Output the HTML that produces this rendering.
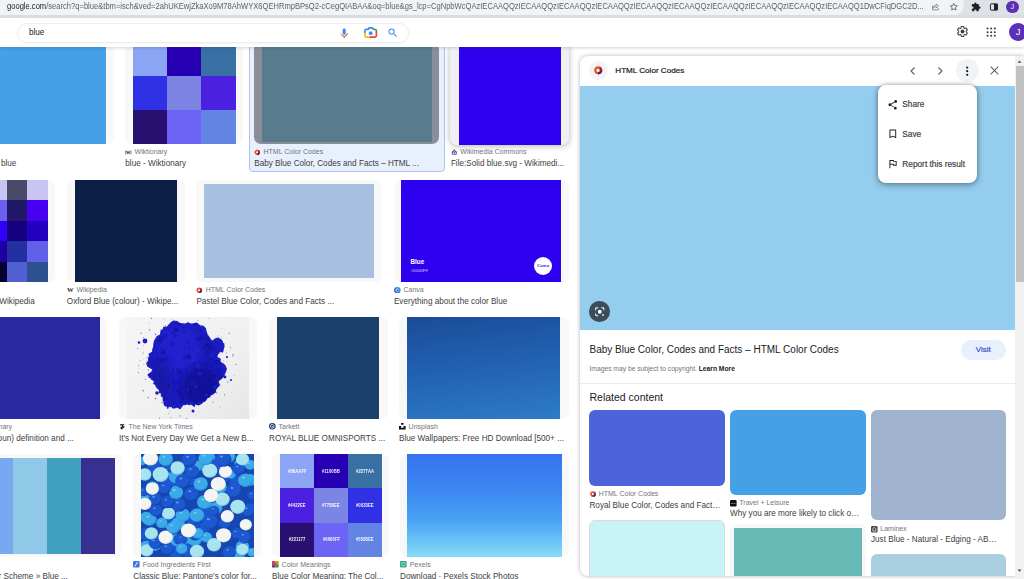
<!DOCTYPE html>
<html lang="en"><head><meta charset="utf-8"><title>blue - Google Search</title>
<style>
*{box-sizing:border-box;margin:0;padding:0}
html,body{width:1024px;height:579px;overflow:hidden;background:#fff;font-family:"Liberation Sans",Arial,sans-serif}
#root{position:relative;width:1024px;height:579px;overflow:hidden;background:#fff}
.abs{position:absolute}
#grid{position:absolute;left:0;top:0;width:579px;height:579px;overflow:hidden}
.tile{position:absolute;border-radius:7px;overflow:hidden}
.im,.cell{position:absolute}
.cell{display:flex;align-items:center;justify-content:center}
.hex{font-size:5.1px;font-weight:700;color:#fff;letter-spacing:.1px;line-height:5px;opacity:.92;transform:scaleX(.82);white-space:nowrap}
.fav{position:absolute;width:6.6px;height:6.6px;line-height:0}
.fav svg{display:block}
.lab{position:absolute;font-size:7px;line-height:10px;color:#70757a;white-space:nowrap}
.ttl{position:absolute;font-size:8.17px;line-height:10px;color:#3c4043;white-space:nowrap}
.sel{position:absolute;background:#e8f0fe;border:1px solid #aec3f5;border-radius:4px}
.cv1{position:absolute;left:16.8px;top:78.3px;font-size:6.3px;line-height:8px;font-weight:700;color:#fff}
.cv2{position:absolute;left:16.9px;top:89.4px;font-size:4.4px;line-height:4px;color:#d8d4ff}
.cvc{position:absolute;left:140.6px;top:77px;width:18px;height:18px;border-radius:50%;background:#fff;display:flex;align-items:center;justify-content:center}
.cvc span{font-family:"Liberation Serif",serif;font-style:italic;font-weight:700;font-size:4.6px;color:#3a20e0;line-height:5px}
/* chrome bar */
#chrome{position:absolute;left:0;top:0;width:1024px;height:17.5px;background:#dee1e6}
#omni{position:absolute;left:-20px;top:-6px;width:983.6px;height:20.6px;border-radius:10.3px;background:#f1f3f4}
#url{position:absolute;left:7px;top:1.4px;font-size:8.3px;line-height:11px;white-space:nowrap;color:#5f6368;transform-origin:0 0;transform:scaleX(.9134)}
#url b{font-weight:400;color:#202124}
#chromeline{position:absolute;left:0;top:14.6px;width:1024px;height:3px;background:#dadce0}
/* google header */
#hdr{position:absolute;left:0;top:17.5px;width:1024px;height:29.4px;background:#fff;box-shadow:0 1px 3px rgba(60,64,67,.22)}
#sbox{position:absolute;left:17.2px;top:5.4px;width:392.3px;height:19.8px;border-radius:9.9px;border:1px solid #eeeeee;background:#fff;box-shadow:0 1px 2px rgba(0,0,0,.04)}
#q{position:absolute;left:28.9px;top:9.4px;font-size:8.2px;line-height:12px;color:#202124}
/* panel */
#pwrap{position:absolute;left:570px;top:47px;width:454px;height:532px;background:#fff;box-shadow:-2px 0 4px rgba(0,0,0,.12)}
#card{position:absolute;left:580.2px;top:55.8px;width:444px;height:520.2px;border-radius:8px 0 0 8px;background:#fff;box-shadow:0 0 4px rgba(0,0,0,.3);overflow:hidden}
#bigimg{position:absolute;left:0;top:29.8px;width:434.8px;height:244.8px;background:#94cdee}
.ptitle{position:absolute;font-size:8.1px;line-height:10px;font-weight:400;color:#202124;white-space:nowrap;-webkit-text-stroke:.22px #202124}
.rt{position:absolute;border-radius:6px}
#sb{position:absolute;left:1015px;top:55.5px;width:9px;height:524.4px;background:#f1f1f1}
#sbthumb{position:absolute;left:.8px;top:10.4px;width:8.2px;height:215.8px;background:#c1c1c1}
#menu{position:absolute;left:877.7px;top:85px;width:99.6px;height:97.9px;border-radius:8px;background:#fff;box-shadow:0 0 4px rgba(0,0,0,.3),0 2px 6px 1px rgba(0,0,0,.22)}
.mi{position:absolute;left:24.6px;font-size:8.3px;line-height:10px;color:#3c4043;white-space:nowrap;font-weight:400;-webkit-text-stroke:.18px #3c4043}
</style></head>
<body><div id="root">
<div id="grid">
<div class="tile" style="left:-20px;top:42.2px;width:133.6px;height:102.0px;background:#f8f8f8;"><div class="im" style="left:0px;top:0px;width:126.4px;height:103px;background:#45a0e6;"></div></div>
<div class="ttl" style="left:0.9px;top:159.4px">blue</div>
<div class="tile" style="left:125.3px;top:42.2px;width:117.5px;height:102.0px;background:#f8f8f8;"><div class="cell" style="left:8.0px;top:0.1px;width:34.4px;height:34.4px;background:#8ca4f4"></div><div class="cell" style="left:42.1px;top:0.1px;width:34.4px;height:34.4px;background:#2800b4"></div><div class="cell" style="left:76.2px;top:0.1px;width:34.4px;height:34.4px;background:#3870a4"></div><div class="cell" style="left:8.0px;top:34.2px;width:34.4px;height:34.4px;background:#3030e4"></div><div class="cell" style="left:42.1px;top:34.2px;width:34.4px;height:34.4px;background:#7c84e4"></div><div class="cell" style="left:76.2px;top:34.2px;width:34.4px;height:34.4px;background:#4c20e0"></div><div class="cell" style="left:8.0px;top:68.3px;width:34.4px;height:34.4px;background:#281070"></div><div class="cell" style="left:42.1px;top:68.3px;width:34.4px;height:34.4px;background:#6c64f4"></div><div class="cell" style="left:76.2px;top:68.3px;width:34.4px;height:34.4px;background:#6484e4"></div></div>
<div class="fav" style="left:125.3px;top:148.7px"><svg viewBox="0 0 16 16" width="6.6" height="6.6"><rect x=".5" y="3" width="15" height="10.500" fill="#e8e8e8"/><path d="M1.500 3.500v9.500M14.500 3.500v9.500" stroke="#555" stroke-width="1.400"/><text x="8" y="12.500" font-family="Liberation Serif,serif" font-size="11" font-weight="700" text-anchor="middle" fill="#222">W</text></svg></div><div class="lab" style="left:134.6px;top:147.3px">Wiktionary</div>
<div class="ttl" style="left:125.3px;top:159.4px">blue - Wiktionary</div>
<div class="sel" style="left:248.8px;top:30px;width:195.9px;height:142.1px"></div>
<div class="tile" style="left:254.2px;top:42.2px;width:184.6px;height:102.0px;background:#8a8e99;"><div class="im" style="left:8px;top:0px;width:170.3px;height:99.6px;background:#587b8e;"></div></div>
<div class="fav" style="left:254.2px;top:148.7px"><svg viewBox="0 0 16 16" width="6.6" height="6.6"><rect width="16" height="16" rx="2.500" fill="#fff"/><g transform="translate(8 8) scale(.9) translate(-8 -8)"><circle cx="8" cy="8" r="7.500" fill="#e9502e"/><path d="M12.300 1.850A7.500 7.500 0 0 1 15.500 8L8 8Z" fill="#a8283e"/><path d="M15.500 8A7.500 7.500 0 0 1 7 15.430L8 8Z" fill="#55205e"/><circle cx="7.600" cy="8.200" r="2.800" fill="#fff"/></g></svg></div><div class="lab" style="left:263.5px;top:147.3px">HTML Color Codes</div>
<div class="ttl" style="left:254.2px;top:159.4px">Baby Blue Color, Codes and Facts – HTML ...</div>
<div class="tile" style="left:450.2px;top:42.2px;width:118.8px;height:102.0px;background:#f0f0f0;box-shadow:0 1px 6px rgba(0,0,0,.3);height:102.7px;"><div class="im" style="left:8.8px;top:0px;width:102.0px;height:103px;background:#2d00f0;"></div></div>
<div class="fav" style="left:451px;top:148.7px"><svg viewBox="0 0 16 16" width="6.6" height="6.6"><circle cx="8" cy="9.500" r="5" fill="none" stroke="#2b6cb8" stroke-width="2.600"/><circle cx="8" cy="9.500" r="2" fill="#d8232a"/><path d="M8 0l2.500 4h-5z" fill="#d8232a"/></svg></div><div class="lab" style="left:460.3px;top:147.3px">Wikimedia Commons</div>
<div class="ttl" style="left:450.9px;top:159.4px">File:Solid blue.svg - Wikimedi...</div>
<div class="tile" style="left:-30px;top:179.8px;width:85.3px;height:102.2px;background:#f8f8f8;"><div class="cell" style="left:16.4px;top:0.0px;width:20.7px;height:20.78px;background:#c8c4f4"></div><div class="cell" style="left:36.8px;top:0.0px;width:20.7px;height:20.78px;background:#4a4a68"></div><div class="cell" style="left:57.199999999999996px;top:0.0px;width:20.7px;height:20.78px;background:#c8c4f4"></div><div class="cell" style="left:16.4px;top:20.48px;width:20.7px;height:20.78px;background:#6c60f0"></div><div class="cell" style="left:36.8px;top:20.48px;width:20.7px;height:20.78px;background:#221868"></div><div class="cell" style="left:57.199999999999996px;top:20.48px;width:20.7px;height:20.78px;background:#4800f0"></div><div class="cell" style="left:16.4px;top:40.96px;width:20.7px;height:20.78px;background:#3000f8"></div><div class="cell" style="left:36.8px;top:40.96px;width:20.7px;height:20.78px;background:#140080"></div><div class="cell" style="left:57.199999999999996px;top:40.96px;width:20.7px;height:20.78px;background:#2200c0"></div><div class="cell" style="left:16.4px;top:61.44px;width:20.7px;height:20.78px;background:#1c00a0"></div><div class="cell" style="left:36.8px;top:61.44px;width:20.7px;height:20.78px;background:#2430a0"></div><div class="cell" style="left:57.199999999999996px;top:61.44px;width:20.7px;height:20.78px;background:#6060e8"></div><div class="cell" style="left:16.4px;top:81.92px;width:20.7px;height:20.78px;background:#040030"></div><div class="cell" style="left:36.8px;top:81.92px;width:20.7px;height:20.78px;background:#5060d0"></div><div class="cell" style="left:57.199999999999996px;top:81.92px;width:20.7px;height:20.78px;background:#2c5090"></div></div>
<div class="ttl" style="left:-0.7px;top:297.2px">Wikipedia</div>
<div class="tile" style="left:66.8px;top:179.8px;width:118.4px;height:102.2px;background:#f8f8f8;"><div class="im" style="left:8.2px;top:0px;width:102.0px;height:103px;background:#0c1f47;"></div></div>
<div class="fav" style="left:67.2px;top:286.5px"><svg viewBox="0 0 16 16" width="6.6" height="6.6"><text x="8" y="12.600" font-family="Liberation Serif,serif" font-size="16" font-weight="700" text-anchor="middle" fill="#333">W</text></svg></div><div class="lab" style="left:76.5px;top:285.1px">Wikipedia</div>
<div class="ttl" style="left:66.8px;top:297.2px">Oxford Blue (colour) - Wikipe...</div>
<div class="tile" style="left:196.4px;top:179.8px;width:185.6px;height:102.2px;background:#f8f8f8;"><div class="im" style="left:7.8px;top:3.9px;width:169.89999999999998px;height:94.5px;background:#a8c0e0;"></div></div>
<div class="fav" style="left:196.4px;top:286.5px"><svg viewBox="0 0 16 16" width="6.6" height="6.6"><rect width="16" height="16" rx="2.500" fill="#fff"/><g transform="translate(8 8) scale(.9) translate(-8 -8)"><circle cx="8" cy="8" r="7.500" fill="#e9502e"/><path d="M12.300 1.850A7.500 7.500 0 0 1 15.500 8L8 8Z" fill="#a8283e"/><path d="M15.500 8A7.500 7.500 0 0 1 7 15.430L8 8Z" fill="#55205e"/><circle cx="7.600" cy="8.200" r="2.800" fill="#fff"/></g></svg></div><div class="lab" style="left:205.70000000000002px;top:285.1px">HTML Color Codes</div>
<div class="ttl" style="left:196.4px;top:297.2px">Pastel Blue Color, Codes and Facts ...</div>
<div class="tile" style="left:393.7px;top:179.8px;width:175.0px;height:102.2px;background:#f8f8f8;"><div class="im" style="left:7.8px;top:0px;width:159.39999999999998px;height:103px;background:#2d00f0;"></div><div class="cv1">Blue</div><div class="cv2">#0000FF</div><div class="cvc"><span>Canva</span></div></div>
<div class="fav" style="left:394.2px;top:286.5px"><svg viewBox="0 0 16 16" width="6.6" height="6.6"><defs><linearGradient id="cg" x1="0" y1="1" x2="1" y2="0"><stop offset="0" stop-color="#7d2ae8"/><stop offset="1" stop-color="#00c4cc"/></linearGradient></defs><circle cx="8" cy="8" r="8" fill="url(#cg)"/><path d="M11 10.200A3.600 3.600 0 1 1 10.600 5.500" fill="none" stroke="#fff" stroke-width="1.600" stroke-linecap="round"/></svg></div><div class="lab" style="left:403.5px;top:285.1px">Canva</div>
<div class="ttl" style="left:393.9px;top:297.2px">Everything about the color Blue</div>
<div class="tile" style="left:-20px;top:317.0px;width:127.0px;height:101.8px;background:#f8f8f8;"><div class="im" style="left:0px;top:0px;width:119.6px;height:103px;background:#2828a0;"></div></div>
<div class="lab" style="left:-1.5px;top:421.9px">nary</div>
<div class="ttl" style="left:-2.4px;top:434.0px">oun) definition and ...</div>
<div class="tile" style="left:118.7px;top:317.0px;width:138.6px;height:101.8px;background:#f8f8f8;"><div class="im" style="left:8.2px;top:0;width:122.1px;height:103px;overflow:hidden"><svg width="122.1" height="103" viewBox="0 0 122.1 103" style="position:absolute;left:0;top:0"><defs><linearGradient id="pbg" x1="0" y1="0" x2="1" y2="1"><stop offset="0" stop-color="#f5f5f5"/><stop offset=".6" stop-color="#f0f0f0"/><stop offset="1" stop-color="#e6e6e8"/></linearGradient><clipPath id="pclip"><path d="M46.3 4.1 L50.2 4.6 L51.6 5.8 L53.3 6.5 L58.4 7.2 L60.8 5.9 L64.7 7.3 L69.5 6.0 L73.5 9.2 L75.9 9.1 L76.0 9.3 L78.4 11.4 L78.9 13.9 L80.1 17.5 L82.9 21.6 L84.8 24.2 L87.5 23.6 L90.0 22.0 L94.3 23.3 L95.2 24.5 L95.2 25.3 L96.6 26.9 L97.0 29.7 L96.3 31.6 L95.7 34.8 L91.4 34.1 L92.2 35.9 L90.7 36.7 L89.8 40.2 L93.2 42.0 L93.0 45.1 L97.0 47.6 L96.4 47.6 L98.0 48.6 L99.3 52.0 L98.0 55.8 L96.3 59.7 L94.4 61.4 L92.6 62.7 L91.0 64.2 L92.3 68.2 L89.7 71.0 L88.6 72.3 L88.5 74.9 L84.5 77.8 L82.8 77.8 L83.0 79.6 L80.3 80.6 L78.3 83.7 L76.7 84.6 L75.2 85.1 L74.8 86.1 L71.3 87.9 L67.8 86.8 L67.3 89.3 L63.5 86.6 L62.8 87.6 L59.2 86.6 L59.1 87.3 L56.0 87.6 L53.0 91.7 L50.9 90.3 L48.4 90.0 L46.7 87.9 L43.7 89.7 L41.5 89.0 L40.8 91.4 L39.9 87.8 L39.7 85.5 L36.2 83.6 L36.3 80.5 L34.4 78.8 L34.3 75.5 L32.3 75.6 L32.6 73.1 L30.3 70.9 L27.9 66.9 L26.7 66.7 L27.7 64.2 L24.4 62.0 L24.2 61.0 L22.4 60.4 L22.5 56.6 L25.0 55.0 L25.8 51.9 L24.1 51.2 L20.9 49.3 L20.5 48.5 L19.8 46.3 L21.6 43.8 L21.6 41.3 L22.5 39.4 L22.2 36.9 L25.7 34.9 L25.9 31.7 L26.8 30.3 L26.9 29.0 L27.0 26.2 L27.9 23.3 L30.2 19.6 L32.3 18.4 L33.6 17.7 L34.2 13.2 L35.7 13.4 L36.9 10.3 L40.2 10.0 L41.4 8.7 L43.5 6.3Z"/></clipPath><filter id="pb" x="-10%" y="-10%" width="120%" height="120%"><feGaussianBlur stdDeviation=".55"/></filter><filter id="pb2" x="-40%" y="-40%" width="180%" height="180%"><feGaussianBlur stdDeviation="4.5"/></filter><filter id="pb3" x="-30%" y="-30%" width="160%" height="160%"><feGaussianBlur stdDeviation=".4"/></filter></defs><rect width="122.1" height="103" fill="url(#pbg)"/><path d="M46.3 4.1 L50.2 4.6 L51.6 5.8 L53.3 6.5 L58.4 7.2 L60.8 5.9 L64.7 7.3 L69.5 6.0 L73.5 9.2 L75.9 9.1 L76.0 9.3 L78.4 11.4 L78.9 13.9 L80.1 17.5 L82.9 21.6 L84.8 24.2 L87.5 23.6 L90.0 22.0 L94.3 23.3 L95.2 24.5 L95.2 25.3 L96.6 26.9 L97.0 29.7 L96.3 31.6 L95.7 34.8 L91.4 34.1 L92.2 35.9 L90.7 36.7 L89.8 40.2 L93.2 42.0 L93.0 45.1 L97.0 47.6 L96.4 47.6 L98.0 48.6 L99.3 52.0 L98.0 55.8 L96.3 59.7 L94.4 61.4 L92.6 62.7 L91.0 64.2 L92.3 68.2 L89.7 71.0 L88.6 72.3 L88.5 74.9 L84.5 77.8 L82.8 77.8 L83.0 79.6 L80.3 80.6 L78.3 83.7 L76.7 84.6 L75.2 85.1 L74.8 86.1 L71.3 87.9 L67.8 86.8 L67.3 89.3 L63.5 86.6 L62.8 87.6 L59.2 86.6 L59.1 87.3 L56.0 87.6 L53.0 91.7 L50.9 90.3 L48.4 90.0 L46.7 87.9 L43.7 89.7 L41.5 89.0 L40.8 91.4 L39.9 87.8 L39.7 85.5 L36.2 83.6 L36.3 80.5 L34.4 78.8 L34.3 75.5 L32.3 75.6 L32.6 73.1 L30.3 70.9 L27.9 66.9 L26.7 66.7 L27.7 64.2 L24.4 62.0 L24.2 61.0 L22.4 60.4 L22.5 56.6 L25.0 55.0 L25.8 51.9 L24.1 51.2 L20.9 49.3 L20.5 48.5 L19.8 46.3 L21.6 43.8 L21.6 41.3 L22.5 39.4 L22.2 36.9 L25.7 34.9 L25.9 31.7 L26.8 30.3 L26.9 29.0 L27.0 26.2 L27.9 23.3 L30.2 19.6 L32.3 18.4 L33.6 17.7 L34.2 13.2 L35.7 13.4 L36.9 10.3 L40.2 10.0 L41.4 8.7 L43.5 6.3Z" fill="#1a1ac0" stroke="#2222c8" stroke-width="1.2" stroke-linejoin="round" filter="url(#pb)"/><g clip-path="url(#pclip)"><ellipse cx="52" cy="34" rx="24" ry="24" fill="#2628da" opacity=".6" filter="url(#pb2)"/><ellipse cx="74" cy="70" rx="20" ry="22" fill="#10108c" opacity=".7" filter="url(#pb2)"/><ellipse cx="34" cy="62" rx="9" ry="24" fill="#141498" opacity=".6" filter="url(#pb2)"/><ellipse cx="80" cy="30" rx="10" ry="10" fill="#1414a0" opacity=".5" filter="url(#pb2)"/><circle cx="35.5" cy="42.8" r="2.1" fill="#101098" opacity="0.51"/><circle cx="50.0" cy="56.5" r="1.2" fill="#101098" opacity="0.29"/><circle cx="47.4" cy="84.6" r="0.8" fill="#0c0c88" opacity="0.54"/><circle cx="41.6" cy="19.2" r="1.5" fill="#2a2adc" opacity="0.53"/><circle cx="84.8" cy="38.4" r="1.6" fill="#2a2adc" opacity="0.46"/><circle cx="85.7" cy="60.2" r="1.2" fill="#0c0c88" opacity="0.33"/><circle cx="67.4" cy="65.0" r="1.2" fill="#2a2adc" opacity="0.34"/><circle cx="81.7" cy="5.7" r="0.9" fill="#1212a4" opacity="0.31"/><circle cx="80.0" cy="28.0" r="2.0" fill="#0c0c88" opacity="0.55"/><circle cx="29.0" cy="13.8" r="1.6" fill="#2a2adc" opacity="0.54"/><circle cx="73.4" cy="21.9" r="1.5" fill="#101098" opacity="0.46"/><circle cx="78.9" cy="52.1" r="0.8" fill="#101098" opacity="0.33"/><circle cx="47.0" cy="66.8" r="1.6" fill="#101098" opacity="0.37"/><circle cx="81.8" cy="85.6" r="0.8" fill="#1212a4" opacity="0.29"/><circle cx="55.4" cy="60.3" r="2.2" fill="#1212a4" opacity="0.42"/><circle cx="70.9" cy="49.2" r="2.1" fill="#2a2adc" opacity="0.39"/><circle cx="70.8" cy="22.4" r="1.9" fill="#0c0c88" opacity="0.31"/><circle cx="90.2" cy="92.2" r="2.4" fill="#2a2adc" opacity="0.33"/><circle cx="76.0" cy="5.4" r="1.6" fill="#0c0c88" opacity="0.38"/><circle cx="62.9" cy="73.1" r="1.5" fill="#0c0c88" opacity="0.32"/><circle cx="87.7" cy="42.6" r="0.8" fill="#2a2adc" opacity="0.46"/><circle cx="91.4" cy="46.4" r="2.4" fill="#1212a4" opacity="0.53"/><circle cx="58.4" cy="89.4" r="0.8" fill="#101098" opacity="0.38"/><circle cx="63.6" cy="78.8" r="1.7" fill="#101098" opacity="0.41"/><circle cx="85.8" cy="54.4" r="1.2" fill="#1212a4" opacity="0.54"/><circle cx="87.9" cy="58.8" r="1.2" fill="#101098" opacity="0.54"/><circle cx="60.9" cy="55.6" r="1.0" fill="#0c0c88" opacity="0.40"/><circle cx="67.2" cy="6.5" r="2.3" fill="#1212a4" opacity="0.41"/><circle cx="97.2" cy="15.0" r="0.9" fill="#101098" opacity="0.27"/><circle cx="62.0" cy="41.2" r="2.3" fill="#1212a4" opacity="0.33"/><circle cx="56.9" cy="15.4" r="1.4" fill="#1212a4" opacity="0.41"/><circle cx="28.5" cy="41.8" r="0.8" fill="#2a2adc" opacity="0.29"/><circle cx="80.8" cy="6.1" r="1.0" fill="#101098" opacity="0.25"/><circle cx="42.2" cy="69.1" r="1.1" fill="#1212a4" opacity="0.28"/><circle cx="77.0" cy="15.1" r="1.6" fill="#2a2adc" opacity="0.47"/><circle cx="74.7" cy="83.1" r="0.7" fill="#1212a4" opacity="0.50"/><circle cx="68.0" cy="52.4" r="2.2" fill="#101098" opacity="0.41"/><circle cx="86.4" cy="59.1" r="2.2" fill="#101098" opacity="0.52"/><circle cx="69.0" cy="35.3" r="1.0" fill="#2a2adc" opacity="0.52"/><circle cx="35.2" cy="74.0" r="1.0" fill="#0c0c88" opacity="0.29"/><circle cx="38.7" cy="69.4" r="1.1" fill="#0c0c88" opacity="0.38"/><circle cx="93.4" cy="52.9" r="1.9" fill="#101098" opacity="0.37"/><circle cx="73.4" cy="5.6" r="1.0" fill="#2a2adc" opacity="0.52"/><circle cx="95.5" cy="14.4" r="1.6" fill="#2a2adc" opacity="0.40"/><circle cx="73.5" cy="21.0" r="0.8" fill="#0c0c88" opacity="0.26"/><circle cx="79.4" cy="59.2" r="2.2" fill="#1212a4" opacity="0.29"/><circle cx="34.4" cy="22.4" r="2.1" fill="#2a2adc" opacity="0.53"/><circle cx="27.4" cy="9.6" r="2.3" fill="#1212a4" opacity="0.27"/><circle cx="27.5" cy="39.2" r="1.4" fill="#2a2adc" opacity="0.38"/><circle cx="66.9" cy="5.2" r="1.9" fill="#101098" opacity="0.30"/><circle cx="55.4" cy="70.5" r="1.4" fill="#101098" opacity="0.43"/><circle cx="27.4" cy="75.3" r="1.3" fill="#0c0c88" opacity="0.49"/><circle cx="75.0" cy="81.5" r="1.8" fill="#1212a4" opacity="0.42"/><circle cx="34.9" cy="56.6" r="1.3" fill="#2a2adc" opacity="0.33"/><circle cx="29.1" cy="70.9" r="1.0" fill="#1212a4" opacity="0.29"/><circle cx="45.7" cy="52.5" r="1.3" fill="#1212a4" opacity="0.48"/><circle cx="51.6" cy="69.0" r="0.8" fill="#2a2adc" opacity="0.34"/><circle cx="27.9" cy="83.9" r="2.4" fill="#0c0c88" opacity="0.32"/><circle cx="93.7" cy="63.9" r="1.3" fill="#1212a4" opacity="0.42"/><circle cx="61.6" cy="39.1" r="2.4" fill="#101098" opacity="0.46"/><circle cx="79.4" cy="92.2" r="0.7" fill="#0c0c88" opacity="0.47"/><circle cx="40.0" cy="40.1" r="0.8" fill="#101098" opacity="0.44"/><circle cx="20.8" cy="27.3" r="1.2" fill="#2a2adc" opacity="0.42"/><circle cx="59.6" cy="91.0" r="1.7" fill="#0c0c88" opacity="0.44"/><circle cx="83.1" cy="10.9" r="1.7" fill="#0c0c88" opacity="0.37"/><circle cx="93.2" cy="38.7" r="2.3" fill="#1212a4" opacity="0.41"/><circle cx="66.5" cy="42.7" r="1.5" fill="#2a2adc" opacity="0.41"/><circle cx="66.6" cy="36.9" r="1.2" fill="#2a2adc" opacity="0.42"/><circle cx="42.1" cy="68.5" r="1.2" fill="#0c0c88" opacity="0.48"/><circle cx="65.7" cy="61.0" r="1.4" fill="#1212a4" opacity="0.27"/><circle cx="44.6" cy="39.8" r="1.7" fill="#2a2adc" opacity="0.27"/><circle cx="90.6" cy="42.7" r="1.5" fill="#101098" opacity="0.26"/><circle cx="27.7" cy="76.9" r="2.2" fill="#101098" opacity="0.54"/><circle cx="83.7" cy="58.3" r="0.9" fill="#1212a4" opacity="0.39"/><circle cx="35.9" cy="8.7" r="1.6" fill="#0c0c88" opacity="0.36"/><circle cx="30.9" cy="41.5" r="1.7" fill="#1212a4" opacity="0.36"/><circle cx="78.0" cy="77.4" r="0.9" fill="#2a2adc" opacity="0.47"/><circle cx="38.6" cy="14.2" r="2.2" fill="#2a2adc" opacity="0.33"/><circle cx="67.6" cy="69.3" r="1.9" fill="#101098" opacity="0.44"/><circle cx="78.8" cy="21.1" r="1.1" fill="#101098" opacity="0.51"/><circle cx="23.1" cy="9.5" r="1.2" fill="#1212a4" opacity="0.26"/><circle cx="23.0" cy="24.0" r="1.2" fill="#0c0c88" opacity="0.52"/><circle cx="32.5" cy="25.1" r="2.4" fill="#1212a4" opacity="0.39"/><circle cx="36.4" cy="34.9" r="2.0" fill="#0c0c88" opacity="0.49"/><circle cx="54.9" cy="78.0" r="2.1" fill="#101098" opacity="0.38"/><circle cx="78.3" cy="39.1" r="1.0" fill="#101098" opacity="0.45"/><circle cx="97.2" cy="33.3" r="1.6" fill="#101098" opacity="0.38"/><circle cx="48.8" cy="12.7" r="2.2" fill="#0c0c88" opacity="0.41"/><circle cx="53.7" cy="55.1" r="2.1" fill="#1212a4" opacity="0.34"/><circle cx="80.5" cy="10.8" r="1.1" fill="#0c0c88" opacity="0.46"/><circle cx="58.6" cy="72.8" r="1.3" fill="#101098" opacity="0.32"/><circle cx="71.3" cy="33.4" r="2.2" fill="#2a2adc" opacity="0.46"/><circle cx="64.4" cy="86.7" r="2.3" fill="#2a2adc" opacity="0.38"/><circle cx="82.6" cy="31.4" r="1.2" fill="#1212a4" opacity="0.54"/><circle cx="76.9" cy="50.5" r="0.8" fill="#2a2adc" opacity="0.26"/><circle cx="72.8" cy="56.6" r="2.1" fill="#2a2adc" opacity="0.49"/><circle cx="62.2" cy="79.3" r="1.7" fill="#101098" opacity="0.28"/><circle cx="55.4" cy="80.9" r="2.1" fill="#101098" opacity="0.40"/><circle cx="62.4" cy="55.1" r="2.3" fill="#1212a4" opacity="0.27"/><circle cx="62.7" cy="74.9" r="0.8" fill="#0c0c88" opacity="0.33"/><circle cx="28.2" cy="32.2" r="0.7" fill="#101098" opacity="0.28"/><circle cx="83.7" cy="42.0" r="1.9" fill="#1212a4" opacity="0.48"/><circle cx="60.7" cy="72.8" r="1.4" fill="#2a2adc" opacity="0.49"/><circle cx="46.0" cy="16.3" r="1.5" fill="#0c0c88" opacity="0.46"/><circle cx="91.4" cy="41.0" r="2.1" fill="#2a2adc" opacity="0.51"/><circle cx="82.9" cy="79.0" r="2.2" fill="#0c0c88" opacity="0.41"/><circle cx="75.4" cy="76.2" r="1.4" fill="#1212a4" opacity="0.52"/><circle cx="39.2" cy="18.6" r="1.8" fill="#101098" opacity="0.35"/><circle cx="50.4" cy="51.6" r="1.2" fill="#0c0c88" opacity="0.39"/><circle cx="77.0" cy="31.3" r="1.0" fill="#101098" opacity="0.52"/><circle cx="78.7" cy="5.5" r="1.5" fill="#0c0c88" opacity="0.34"/><circle cx="35.4" cy="36.3" r="1.7" fill="#1212a4" opacity="0.43"/><circle cx="37.5" cy="20.6" r="1.2" fill="#101098" opacity="0.52"/><circle cx="93.1" cy="60.4" r="2.3" fill="#1212a4" opacity="0.51"/><circle cx="57.8" cy="40.2" r="2.3" fill="#0c0c88" opacity="0.39"/><circle cx="37.2" cy="8.5" r="2.3" fill="#1212a4" opacity="0.54"/><circle cx="82.0" cy="73.7" r="2.0" fill="#0c0c88" opacity="0.45"/><circle cx="38.5" cy="5.0" r="1.5" fill="#2a2adc" opacity="0.39"/><circle cx="39.2" cy="41.9" r="2.2" fill="#1212a4" opacity="0.30"/><circle cx="45.1" cy="27.3" r="2.2" fill="#101098" opacity="0.44"/><circle cx="97.5" cy="28.0" r="1.6" fill="#101098" opacity="0.42"/><circle cx="33.9" cy="22.4" r="2.3" fill="#101098" opacity="0.50"/><circle cx="26.4" cy="28.3" r="1.9" fill="#0c0c88" opacity="0.52"/><circle cx="74.1" cy="11.5" r="2.0" fill="#2a2adc" opacity="0.26"/><circle cx="34.6" cy="21.4" r="1.9" fill="#1212a4" opacity="0.31"/><circle cx="62.4" cy="51.3" r="1.0" fill="#2a2adc" opacity="0.34"/><circle cx="51.6" cy="54.1" r="2.4" fill="#0c0c88" opacity="0.36"/><circle cx="73.6" cy="13.5" r="1.4" fill="#1212a4" opacity="0.47"/><circle cx="81.2" cy="15.0" r="1.5" fill="#1212a4" opacity="0.46"/><circle cx="57.1" cy="30.4" r="0.9" fill="#0c0c88" opacity="0.51"/><circle cx="85.9" cy="68.7" r="2.2" fill="#101098" opacity="0.34"/><circle cx="49.3" cy="52.6" r="1.2" fill="#2a2adc" opacity="0.48"/><circle cx="63.3" cy="11.8" r="1.0" fill="#1212a4" opacity="0.47"/><circle cx="45.7" cy="89.1" r="1.7" fill="#2a2adc" opacity="0.38"/><circle cx="49.8" cy="13.2" r="1.8" fill="#101098" opacity="0.45"/><circle cx="75.2" cy="20.2" r="1.4" fill="#1212a4" opacity="0.43"/><circle cx="27.0" cy="24.4" r="1.0" fill="#0c0c88" opacity="0.38"/><circle cx="80.2" cy="34.7" r="2.1" fill="#101098" opacity="0.44"/><circle cx="79.8" cy="77.9" r="1.4" fill="#2a2adc" opacity="0.53"/><circle cx="68.6" cy="69.4" r="1.7" fill="#2a2adc" opacity="0.54"/><circle cx="81.6" cy="63.4" r="1.7" fill="#0c0c88" opacity="0.33"/><circle cx="34.7" cy="31.6" r="1.5" fill="#1212a4" opacity="0.31"/><circle cx="46.0" cy="30.4" r="0.9" fill="#101098" opacity="0.33"/><circle cx="62.0" cy="30.9" r="1.1" fill="#101098" opacity="0.42"/><circle cx="35.5" cy="88.0" r="2.4" fill="#101098" opacity="0.42"/><circle cx="22.1" cy="63.3" r="2.0" fill="#101098" opacity="0.32"/><circle cx="65.0" cy="66.7" r="1.3" fill="#2a2adc" opacity="0.33"/><circle cx="88.9" cy="44.7" r="1.9" fill="#101098" opacity="0.52"/><circle cx="62.4" cy="54.5" r="1.7" fill="#2a2adc" opacity="0.30"/><circle cx="78.2" cy="84.7" r="1.3" fill="#101098" opacity="0.29"/><circle cx="84.3" cy="30.0" r="2.2" fill="#101098" opacity="0.48"/><circle cx="48.3" cy="18.9" r="1.7" fill="#0c0c88" opacity="0.39"/><circle cx="51.5" cy="74.4" r="2.3" fill="#101098" opacity="0.34"/><circle cx="72.4" cy="70.4" r="1.3" fill="#0c0c88" opacity="0.30"/><circle cx="52.1" cy="7.0" r="1.6" fill="#0c0c88" opacity="0.42"/><circle cx="33.5" cy="50.8" r="1.1" fill="#2a2adc" opacity="0.27"/><circle cx="81.2" cy="68.9" r="2.0" fill="#1212a4" opacity="0.54"/><circle cx="66.8" cy="46.3" r="1.4" fill="#1212a4" opacity="0.48"/><circle cx="57.9" cy="93.5" r="2.1" fill="#1212a4" opacity="0.50"/><circle cx="29.2" cy="14.3" r="2.3" fill="#2a2adc" opacity="0.41"/><circle cx="53.7" cy="85.4" r="1.2" fill="#0c0c88" opacity="0.34"/><circle cx="68.1" cy="43.0" r="1.3" fill="#2a2adc" opacity="0.48"/><circle cx="43.8" cy="57.4" r="0.8" fill="#0c0c88" opacity="0.50"/><circle cx="38.9" cy="82.6" r="2.4" fill="#1212a4" opacity="0.46"/><circle cx="61.0" cy="25.5" r="1.2" fill="#1212a4" opacity="0.53"/><circle cx="88.6" cy="93.9" r="1.9" fill="#2a2adc" opacity="0.51"/><circle cx="52.9" cy="76.5" r="1.1" fill="#1212a4" opacity="0.42"/><circle cx="90.5" cy="12.9" r="2.0" fill="#0c0c88" opacity="0.51"/><circle cx="64.9" cy="44.8" r="1.2" fill="#2a2adc" opacity="0.26"/><circle cx="33.4" cy="43.7" r="1.5" fill="#1212a4" opacity="0.29"/></g><circle cx="90.5" cy="26" r="5.2" fill="#1c1cc2" filter="url(#pb3)"/><circle cx="18" cy="24" r="2.4" fill="#1c1cc2" filter="url(#pb3)"/><circle cx="12" cy="25.5" r="1.3" fill="#1c1cc2" filter="url(#pb3)"/><circle cx="40" cy="86" r="3.6" fill="#1c1cc2" filter="url(#pb3)"/><circle cx="47" cy="89" r="2.6" fill="#1c1cc2" filter="url(#pb3)"/><circle cx="72" cy="86" r="1.8" fill="#1c1cc2" filter="url(#pb3)"/><circle cx="66" cy="94" r="1.5" fill="#1c1cc2" filter="url(#pb3)"/><circle cx="95" cy="50" r="2.3" fill="#1c1cc2" filter="url(#pb3)"/><circle cx="98" cy="60" r="1.4" fill="#1c1cc2" filter="url(#pb3)"/><circle cx="22" cy="58" r="1.5" fill="#1c1cc2" filter="url(#pb3)"/><circle cx="100" cy="40" r="1.1" fill="#1c1cc2" filter="url(#pb3)"/><circle cx="104" cy="63" r="1.0" fill="#1c1cc2" filter="url(#pb3)"/><circle cx="43" cy="8" r="1.1" fill="#1c1cc2" filter="url(#pb3)"/><circle cx="88" cy="70" r="1.8" fill="#1c1cc2" filter="url(#pb3)"/><circle cx="30" cy="76" r="1.8" fill="#1c1cc2" filter="url(#pb3)"/><circle cx="44.4" cy="2.2" r="0.42" fill="#2a2cc8" opacity="0.63"/><circle cx="42.4" cy="94.6" r="0.33" fill="#2a2cc8" opacity="0.79"/><circle cx="45.4" cy="5.0" r="0.42" fill="#2a2cc8" opacity="0.83"/><circle cx="89.6" cy="21.3" r="0.60" fill="#2a2cc8" opacity="0.75"/><circle cx="16.6" cy="28.1" r="0.38" fill="#2a2cc8" opacity="0.87"/><circle cx="105.8" cy="39.6" r="0.42" fill="#2a2cc8" opacity="0.81"/><circle cx="99.6" cy="36.1" r="0.48" fill="#2a2cc8" opacity="0.84"/><circle cx="32.6" cy="101.1" r="0.68" fill="#2a2cc8" opacity="0.61"/><circle cx="83.5" cy="100.5" r="0.32" fill="#2a2cc8" opacity="0.75"/><circle cx="16.9" cy="47.6" r="0.40" fill="#2a2cc8" opacity="0.80"/><circle cx="20.0" cy="40.8" r="0.53" fill="#2a2cc8" opacity="0.89"/><circle cx="91.0" cy="18.7" r="0.37" fill="#2a2cc8" opacity="0.47"/><circle cx="37.0" cy="1.9" r="0.29" fill="#2a2cc8" opacity="0.86"/><circle cx="104.8" cy="75.2" r="0.25" fill="#2a2cc8" opacity="0.69"/><circle cx="16.2" cy="35.9" r="0.56" fill="#2a2cc8" opacity="0.48"/><circle cx="99.4" cy="44.5" r="0.35" fill="#2a2cc8" opacity="0.77"/><circle cx="107.6" cy="58.6" r="0.33" fill="#2a2cc8" opacity="0.85"/><circle cx="22.0" cy="5.7" r="0.57" fill="#2a2cc8" opacity="0.40"/><circle cx="89.0" cy="19.1" r="0.29" fill="#2a2cc8" opacity="0.79"/><circle cx="94.8" cy="20.8" r="0.52" fill="#2a2cc8" opacity="0.42"/><circle cx="24.4" cy="1.4" r="0.66" fill="#2a2cc8" opacity="0.67"/><circle cx="18.2" cy="15.5" r="0.31" fill="#2a2cc8" opacity="0.62"/><circle cx="10.6" cy="31.6" r="0.58" fill="#2a2cc8" opacity="0.53"/><circle cx="101.0" cy="65.1" r="0.73" fill="#2a2cc8" opacity="0.56"/><circle cx="22.7" cy="13.0" r="0.69" fill="#2a2cc8" opacity="0.65"/><circle cx="97.7" cy="57.1" r="0.35" fill="#2a2cc8" opacity="0.72"/><circle cx="16.5" cy="20.4" r="0.59" fill="#2a2cc8" opacity="0.43"/><circle cx="16.2" cy="73.8" r="0.70" fill="#2a2cc8" opacity="0.77"/><circle cx="11.6" cy="48.6" r="0.53" fill="#2a2cc8" opacity="0.59"/><circle cx="59.5" cy="101.6" r="0.61" fill="#2a2cc8" opacity="0.70"/><circle cx="18.3" cy="62.2" r="0.51" fill="#2a2cc8" opacity="0.75"/><circle cx="92.8" cy="90.0" r="0.58" fill="#2a2cc8" opacity="0.47"/><circle cx="96.6" cy="44.0" r="0.48" fill="#2a2cc8" opacity="0.66"/><circle cx="97.6" cy="77.7" r="0.51" fill="#2a2cc8" opacity="0.87"/><circle cx="106.0" cy="37.9" r="0.64" fill="#2a2cc8" opacity="0.89"/><circle cx="27.0" cy="15.5" r="0.32" fill="#2a2cc8" opacity="0.83"/><circle cx="25.0" cy="70.8" r="0.37" fill="#2a2cc8" opacity="0.55"/><circle cx="107.5" cy="27.8" r="0.37" fill="#2a2cc8" opacity="0.48"/><circle cx="13.9" cy="16.2" r="0.66" fill="#2a2cc8" opacity="0.68"/><circle cx="102.3" cy="16.3" r="0.76" fill="#2a2cc8" opacity="0.49"/><circle cx="68.9" cy="98.2" r="0.28" fill="#2a2cc8" opacity="0.61"/><circle cx="21.3" cy="80.5" r="0.67" fill="#2a2cc8" opacity="0.64"/><circle cx="12.1" cy="51.4" r="0.35" fill="#2a2cc8" opacity="0.64"/><circle cx="16.5" cy="34.9" r="0.28" fill="#2a2cc8" opacity="0.54"/><circle cx="103.5" cy="30.3" r="0.54" fill="#2a2cc8" opacity="0.77"/><circle cx="13.0" cy="43.8" r="0.61" fill="#2a2cc8" opacity="0.51"/><circle cx="89.7" cy="75.8" r="0.65" fill="#2a2cc8" opacity="0.79"/><circle cx="85.9" cy="85.3" r="0.71" fill="#2a2cc8" opacity="0.46"/><circle cx="109.2" cy="47.2" r="0.50" fill="#2a2cc8" opacity="0.83"/><circle cx="28.5" cy="81.5" r="0.73" fill="#2a2cc8" opacity="0.73"/><circle cx="43.9" cy="100.6" r="0.52" fill="#2a2cc8" opacity="0.49"/><circle cx="19.5" cy="43.9" r="0.36" fill="#2a2cc8" opacity="0.61"/><circle cx="11.4" cy="55.6" r="0.53" fill="#2a2cc8" opacity="0.67"/><circle cx="41.6" cy="96.6" r="0.46" fill="#2a2cc8" opacity="0.84"/><circle cx="82.1" cy="1.2" r="0.50" fill="#2a2cc8" opacity="0.47"/><circle cx="16.2" cy="42.6" r="0.31" fill="#2a2cc8" opacity="0.59"/><circle cx="28.5" cy="17.5" r="0.72" fill="#2a2cc8" opacity="0.77"/><circle cx="21.3" cy="52.9" r="0.67" fill="#2a2cc8" opacity="0.77"/><circle cx="38.3" cy="9.0" r="0.72" fill="#2a2cc8" opacity="0.68"/><circle cx="35.1" cy="85.5" r="0.68" fill="#2a2cc8" opacity="0.59"/><circle cx="71.1" cy="3.3" r="0.52" fill="#2a2cc8" opacity="0.64"/><circle cx="97.0" cy="27.0" r="0.64" fill="#2a2cc8" opacity="0.51"/><circle cx="95.3" cy="26.1" r="0.67" fill="#2a2cc8" opacity="0.58"/><circle cx="91.3" cy="21.0" r="0.75" fill="#2a2cc8" opacity="0.86"/><circle cx="53.0" cy="99.0" r="0.72" fill="#2a2cc8" opacity="0.55"/><circle cx="93.4" cy="68.0" r="0.43" fill="#2a2cc8" opacity="0.59"/><circle cx="94.8" cy="11.4" r="0.46" fill="#2a2cc8" opacity="0.57"/></svg></div></div>
<div class="fav" style="left:119.2px;top:423.3px"><svg viewBox="0 0 16 16" width="6.6" height="6.6"><path d="M3.500 3c2-1.500 4 .5 6 .3 1.500-.1 2.500-1 3-2 .5 2.500-1 4-3 4.200V13c0 1-1.500 2.200-3.500 2.500-1.500-.8-2.500-2-2.500-3.500 0-2 2-3 3.500-3.500V5.300C5.500 5 4.500 5.500 4 6.500 2.500 6 2.500 4 3.500 3z" fill="#1a1a1a"/><path d="M9.500 7.500l3.500-1.200v2l-3.500 1.200zM9.500 10.500l3.500-1.200v2l-3.500 1.200z" fill="#1a1a1a"/></svg></div><div class="lab" style="left:128.5px;top:421.9px">The New York Times</div>
<div class="ttl" style="left:118.9px;top:434.0px">It's Not Every Day We Get a New B...</div>
<div class="tile" style="left:268.7px;top:317.0px;width:119.3px;height:101.8px;background:#f8f8f8;"><div class="im" style="left:8.7px;top:0px;width:102.1px;height:103px;background:#19416b;"></div></div>
<div class="fav" style="left:269.2px;top:423.3px"><svg viewBox="0 0 16 16" width="6.6" height="6.6"><circle cx="8" cy="8" r="8" fill="#1b3f7a"/><path d="M12.500 9.500A4.600 4.600 0 1 1 8 3.400c2 0 3.400 1.200 3.400 2.800S10.200 8.800 8.800 8.800" fill="none" stroke="#fff" stroke-width="1.800" stroke-linecap="round"/></svg></div><div class="lab" style="left:278.5px;top:421.9px">Tarkett</div>
<div class="ttl" style="left:269px;top:434.0px">ROYAL BLUE OMNISPORTS ...</div>
<div class="tile" style="left:398.9px;top:317.0px;width:170.1px;height:101.8px;background:#f8f8f8;"><div class="im" style="left:8.1px;top:0px;width:153.3px;height:103px;background:linear-gradient(172deg,#1b4c98 0%,#2160b0 45%,#2d7cc8 100%);"></div></div>
<div class="fav" style="left:399.3px;top:423.3px"><svg viewBox="0 0 16 16" width="6.6" height="6.6"><path d="M5 0h6v4.500H5zM0 7h5v4.500h6V7h5v9H0z" fill="#111"/></svg></div><div class="lab" style="left:408.6px;top:421.9px">Unsplash</div>
<div class="ttl" style="left:399px;top:434.0px">Blue Wallpapers: Free HD Download [500+ ...</div>
<div class="tile" style="left:-20px;top:454.3px;width:141.6px;height:102.3px;background:#f8f8f8;"><div class="im" style="left:20px;top:4px;width:12.600000000000001px;height:95.6px;background:#78a8f0;"></div><div class="im" style="left:32.6px;top:4px;width:34.300000000000004px;height:95.6px;background:#90c8e8;"></div><div class="im" style="left:66.9px;top:4px;width:34.3px;height:95.6px;background:#40a0c0;"></div><div class="im" style="left:101.2px;top:4px;width:33.89999999999999px;height:95.6px;background:#383090;"></div></div>
<div class="ttl" style="left:-1.5px;top:571.8px">r Scheme » Blue ...</div>
<div class="tile" style="left:133.3px;top:454.3px;width:128.3px;height:102.3px;background:#f8f8f8;"><div class="im" style="left:7.3px;top:0;width:113.2px;height:103px;overflow:hidden"><svg width="113.2" height="103" viewBox="0 0 113.2 103" style="position:absolute;left:0;top:0"><defs><radialGradient id="cdw" cx=".42" cy=".38" r=".7"><stop offset="0" stop-color="#f4f5f3"/><stop offset=".7" stop-color="#f4f5f3"/><stop offset="1" stop-color="#c3ced4"/></radialGradient><radialGradient id="cdm" cx=".42" cy=".38" r=".7"><stop offset="0" stop-color="#3aaae8"/><stop offset=".7" stop-color="#3aaae8"/><stop offset="1" stop-color="#1c7cc6"/></radialGradient><radialGradient id="cdd" cx=".42" cy=".38" r=".7"><stop offset="0" stop-color="#1a58d0"/><stop offset=".7" stop-color="#1a58d0"/><stop offset="1" stop-color="#0c2f98"/></radialGradient><radialGradient id="cdl" cx=".42" cy=".38" r=".7"><stop offset="0" stop-color="#a8e4f0"/><stop offset=".7" stop-color="#a8e4f0"/><stop offset="1" stop-color="#6cbcd8"/></radialGradient><filter id="cb" x="-5%" y="-5%" width="110%" height="110%"><feGaussianBlur stdDeviation=".35"/></filter></defs><g filter="url(#cb)"><rect width="113.2" height="103" fill="#1646b0"/><ellipse cx="67.1" cy="13.4" rx="7.4" ry="6.6" fill="url(#cdm)"/><ellipse cx="70.8" cy="6.7" rx="6.0" ry="5.4" fill="url(#cdd)"/><ellipse cx="29.4" cy="24.1" rx="7.5" ry="6.7" fill="url(#cdd)"/><ellipse cx="61.2" cy="56.6" rx="6.6" ry="5.9" fill="url(#cdd)"/><ellipse cx="26.3" cy="15.6" rx="7.4" ry="6.6" fill="url(#cdm)"/><ellipse cx="83.9" cy="69.2" rx="6.1" ry="5.5" fill="url(#cdd)"/><ellipse cx="4.8" cy="80.3" rx="7.2" ry="6.5" fill="url(#cdd)"/><ellipse cx="53.5" cy="74.0" rx="7.3" ry="6.6" fill="url(#cdd)"/><ellipse cx="44.7" cy="82.5" rx="6.7" ry="6.0" fill="url(#cdd)"/><ellipse cx="99.5" cy="10.0" rx="6.2" ry="5.6" fill="url(#cdm)"/><ellipse cx="29.2" cy="69.2" rx="7.2" ry="6.5" fill="url(#cdm)"/><ellipse cx="47.7" cy="85.8" rx="6.9" ry="6.2" fill="url(#cdd)"/><ellipse cx="66.2" cy="60.2" rx="7.4" ry="6.6" fill="url(#cdd)"/><ellipse cx="96.9" cy="102.1" rx="7.0" ry="6.3" fill="url(#cdm)"/><ellipse cx="79.1" cy="33.6" rx="6.8" ry="6.1" fill="url(#cdm)"/><ellipse cx="64.4" cy="73.5" rx="6.3" ry="5.7" fill="url(#cdd)"/><ellipse cx="30.2" cy="12.8" rx="6.7" ry="6.1" fill="url(#cdd)"/><ellipse cx="10.0" cy="82.5" rx="6.6" ry="6.0" fill="url(#cdd)"/><ellipse cx="2.3" cy="44.0" rx="6.6" ry="6.0" fill="url(#cdm)"/><ellipse cx="5.0" cy="63.3" rx="6.1" ry="5.5" fill="url(#cdm)"/><ellipse cx="37.5" cy="90.7" rx="7.5" ry="6.7" fill="url(#cdd)"/><ellipse cx="26.7" cy="3.7" rx="6.0" ry="5.4" fill="url(#cdd)"/><ellipse cx="67.9" cy="3.2" rx="6.3" ry="5.7" fill="url(#cdm)"/><ellipse cx="33.0" cy="27.1" rx="7.0" ry="6.3" fill="url(#cdd)"/><ellipse cx="35.5" cy="98.7" rx="7.3" ry="6.6" fill="url(#cdd)"/><ellipse cx="42.6" cy="89.6" rx="6.6" ry="5.9" fill="url(#cdd)"/><ellipse cx="77.1" cy="10.6" rx="7.5" ry="6.7" fill="url(#cdd)"/><ellipse cx="30.7" cy="65.3" rx="7.1" ry="6.4" fill="url(#cdd)"/><ellipse cx="49.5" cy="26.6" rx="6.5" ry="5.8" fill="url(#cdd)"/><ellipse cx="1.3" cy="42.8" rx="6.9" ry="6.2" fill="url(#cdd)"/><ellipse cx="42.6" cy="60.7" rx="6.2" ry="5.6" fill="url(#cdm)"/><ellipse cx="52.8" cy="70.0" rx="6.5" ry="5.9" fill="url(#cdd)"/><ellipse cx="83.5" cy="2.3" rx="6.1" ry="5.5" fill="url(#cdd)"/><ellipse cx="109.0" cy="25.9" rx="6.7" ry="6.0" fill="url(#cdm)"/><ellipse cx="68.1" cy="18.3" rx="6.3" ry="5.7" fill="url(#cdd)"/><ellipse cx="95.5" cy="27.2" rx="7.2" ry="6.5" fill="url(#cdd)"/><ellipse cx="87.4" cy="2.8" rx="6.9" ry="6.2" fill="url(#cdm)"/><ellipse cx="35.1" cy="22.9" rx="7.2" ry="6.5" fill="url(#cdm)"/><ellipse cx="37.1" cy="69.8" rx="7.0" ry="6.3" fill="url(#cdm)"/><ellipse cx="11.5" cy="33.2" rx="6.5" ry="5.9" fill="url(#cdm)"/><ellipse cx="49.6" cy="88.1" rx="6.3" ry="5.6" fill="url(#cdm)"/><ellipse cx="84.0" cy="22.5" rx="6.9" ry="6.2" fill="url(#cdd)"/><ellipse cx="25.5" cy="12.5" rx="6.8" ry="6.1" fill="url(#cdd)"/><ellipse cx="35.7" cy="86.1" rx="6.9" ry="6.2" fill="url(#cdm)"/><ellipse cx="38.5" cy="85.3" rx="6.1" ry="5.5" fill="url(#cdd)"/><ellipse cx="39.1" cy="13.4" rx="6.4" ry="5.8" fill="url(#cdd)"/><ellipse cx="52.6" cy="65.3" rx="6.4" ry="5.8" fill="url(#cdd)"/><ellipse cx="46.4" cy="94.8" rx="6.2" ry="5.6" fill="url(#cdd)"/><ellipse cx="54.0" cy="85.8" rx="6.9" ry="6.2" fill="url(#cdm)"/><ellipse cx="49.2" cy="97.9" rx="7.4" ry="6.7" fill="url(#cdd)"/><ellipse cx="3.7" cy="47.0" rx="7.1" ry="6.4" fill="url(#cdm)"/><ellipse cx="109.1" cy="56.0" rx="7.3" ry="6.6" fill="url(#cdd)"/><ellipse cx="97.1" cy="100.0" rx="6.2" ry="5.6" fill="url(#cdm)"/><ellipse cx="5.1" cy="93.1" rx="7.0" ry="6.3" fill="url(#cdm)"/><ellipse cx="101.5" cy="92.7" rx="6.9" ry="6.2" fill="url(#cdm)"/><ellipse cx="54.5" cy="12.4" rx="6.8" ry="6.1" fill="url(#cdm)"/><ellipse cx="75.0" cy="54.1" rx="6.6" ry="6.0" fill="url(#cdm)"/><ellipse cx="12.9" cy="12.9" rx="7.5" ry="6.7" fill="url(#cdd)"/><ellipse cx="54.0" cy="80.6" rx="6.5" ry="5.9" fill="url(#cdd)"/><ellipse cx="13.8" cy="91.4" rx="6.2" ry="5.6" fill="url(#cdm)"/><ellipse cx="90.2" cy="20.5" rx="4.7" ry="4.4" fill="url(#cdm)"/><ellipse cx="89.0" cy="18.8" rx="0.9" ry="0.6" fill="#fff" opacity=".4"/><ellipse cx="73.1" cy="56.6" rx="5.3" ry="4.9" fill="url(#cdd)"/><ellipse cx="71.8" cy="54.7" rx="1.1" ry="0.6" fill="#fff" opacity=".4"/><ellipse cx="111.1" cy="98.3" rx="4.7" ry="4.4" fill="url(#cdm)"/><ellipse cx="109.9" cy="96.7" rx="0.9" ry="0.6" fill="#fff" opacity=".4"/><ellipse cx="2.8" cy="37.6" rx="4.7" ry="4.4" fill="url(#cdd)"/><ellipse cx="1.7" cy="35.9" rx="0.9" ry="0.6" fill="#fff" opacity=".4"/><ellipse cx="0.9" cy="7.2" rx="4.7" ry="4.4" fill="url(#cdm)"/><ellipse cx="-0.2" cy="5.6" rx="0.9" ry="0.6" fill="#fff" opacity=".4"/><ellipse cx="111.1" cy="41.4" rx="4.7" ry="4.4" fill="url(#cdd)"/><ellipse cx="109.9" cy="39.7" rx="0.9" ry="0.6" fill="#fff" opacity=".4"/><ellipse cx="109.2" cy="11.0" rx="5.3" ry="4.9" fill="url(#cdm)"/><ellipse cx="107.8" cy="9.2" rx="1.1" ry="0.6" fill="#fff" opacity=".4"/><ellipse cx="40.8" cy="85.1" rx="5.7" ry="5.3" fill="url(#cdd)"/><ellipse cx="39.4" cy="83.1" rx="1.1" ry="0.7" fill="#fff" opacity=".4"/><ellipse cx="65.5" cy="83.2" rx="5.7" ry="5.3" fill="url(#cdm)"/><ellipse cx="64.1" cy="81.2" rx="1.1" ry="0.7" fill="#fff" opacity=".4"/><ellipse cx="95.9" cy="79.4" rx="5.7" ry="5.3" fill="url(#cdd)"/><ellipse cx="94.5" cy="77.4" rx="1.1" ry="0.7" fill="#fff" opacity=".4"/><ellipse cx="101.6" cy="95.5" rx="6.1" ry="5.7" fill="url(#cdl)"/><ellipse cx="88.3" cy="98.3" rx="6.6" ry="6.2" fill="url(#cdd)"/><ellipse cx="86.6" cy="96.0" rx="1.3" ry="0.8" fill="#fff" opacity=".4"/><ellipse cx="73.1" cy="90.8" rx="7.2" ry="6.7" fill="url(#cdl)"/><ellipse cx="56.0" cy="97.4" rx="7.2" ry="6.7" fill="url(#cdl)"/><ellipse cx="40.8" cy="94.6" rx="5.7" ry="5.3" fill="url(#cdm)"/><ellipse cx="39.4" cy="92.6" rx="1.1" ry="0.7" fill="#fff" opacity=".4"/><ellipse cx="5.7" cy="96.4" rx="6.6" ry="6.2" fill="url(#cdl)"/><ellipse cx="26.6" cy="94.6" rx="6.6" ry="6.2" fill="url(#cdd)"/><ellipse cx="24.9" cy="92.2" rx="1.3" ry="0.8" fill="#fff" opacity=".4"/><ellipse cx="14.2" cy="88.9" rx="6.6" ry="6.2" fill="url(#cdd)"/><ellipse cx="12.6" cy="86.5" rx="1.3" ry="0.8" fill="#fff" opacity=".4"/><ellipse cx="57.0" cy="79.4" rx="5.7" ry="5.3" fill="url(#cdm)"/><ellipse cx="55.5" cy="77.4" rx="1.1" ry="0.7" fill="#fff" opacity=".4"/><ellipse cx="10.4" cy="79.4" rx="6.6" ry="6.2" fill="url(#cdl)"/><ellipse cx="24.7" cy="83.2" rx="7.2" ry="6.7" fill="url(#cdw)"/><ellipse cx="103.5" cy="83.2" rx="6.6" ry="6.2" fill="url(#cdd)"/><ellipse cx="101.8" cy="80.8" rx="1.3" ry="0.8" fill="#fff" opacity=".4"/><ellipse cx="82.6" cy="81.3" rx="7.6" ry="7.1" fill="url(#cdw)"/><ellipse cx="104.8" cy="70.8" rx="6.1" ry="5.7" fill="url(#cdw)"/><ellipse cx="47.5" cy="76.5" rx="7.6" ry="7.1" fill="url(#cdw)"/><ellipse cx="32.3" cy="73.7" rx="6.6" ry="6.2" fill="url(#cdm)"/><ellipse cx="30.6" cy="71.3" rx="1.3" ry="0.8" fill="#fff" opacity=".4"/><ellipse cx="20.9" cy="68.9" rx="5.7" ry="5.3" fill="url(#cdm)"/><ellipse cx="19.5" cy="66.9" rx="1.1" ry="0.7" fill="#fff" opacity=".4"/><ellipse cx="8.5" cy="65.1" rx="7.2" ry="6.7" fill="url(#cdm)"/><ellipse cx="6.7" cy="62.6" rx="1.4" ry="0.9" fill="#fff" opacity=".4"/><ellipse cx="86.4" cy="62.3" rx="6.6" ry="6.2" fill="url(#cdw)"/><ellipse cx="69.3" cy="68.0" rx="8.0" ry="7.4" fill="url(#cdd)"/><ellipse cx="67.3" cy="65.2" rx="1.6" ry="1.0" fill="#fff" opacity=".4"/><ellipse cx="56.0" cy="61.3" rx="7.2" ry="6.7" fill="url(#cdm)"/><ellipse cx="54.2" cy="58.8" rx="1.4" ry="0.9" fill="#fff" opacity=".4"/><ellipse cx="41.8" cy="61.3" rx="7.2" ry="6.7" fill="url(#cdm)"/><ellipse cx="40.0" cy="58.8" rx="1.4" ry="0.9" fill="#fff" opacity=".4"/><ellipse cx="27.5" cy="59.4" rx="6.6" ry="6.2" fill="url(#cdl)"/><ellipse cx="15.2" cy="56.6" rx="6.6" ry="6.2" fill="url(#cdd)"/><ellipse cx="13.5" cy="54.3" rx="1.3" ry="0.8" fill="#fff" opacity=".4"/><ellipse cx="107.3" cy="56.6" rx="6.6" ry="6.2" fill="url(#cdd)"/><ellipse cx="105.6" cy="54.3" rx="1.3" ry="0.8" fill="#fff" opacity=".4"/><ellipse cx="96.8" cy="52.8" rx="7.6" ry="7.1" fill="url(#cdl)"/><ellipse cx="63.6" cy="48.0" rx="7.6" ry="7.1" fill="url(#cdm)"/><ellipse cx="61.7" cy="45.4" rx="1.5" ry="0.9" fill="#fff" opacity=".4"/><ellipse cx="38.0" cy="50.9" rx="7.2" ry="6.7" fill="url(#cdd)"/><ellipse cx="36.2" cy="48.4" rx="1.4" ry="0.9" fill="#fff" opacity=".4"/><ellipse cx="26.6" cy="48.0" rx="6.6" ry="6.2" fill="url(#cdd)"/><ellipse cx="24.9" cy="45.7" rx="1.3" ry="0.8" fill="#fff" opacity=".4"/><ellipse cx="14.2" cy="45.2" rx="6.6" ry="6.2" fill="url(#cdd)"/><ellipse cx="12.6" cy="42.9" rx="1.3" ry="0.8" fill="#fff" opacity=".4"/><ellipse cx="3.8" cy="49.9" rx="6.6" ry="6.2" fill="url(#cdw)"/><ellipse cx="81.6" cy="45.2" rx="7.2" ry="6.7" fill="url(#cdl)"/><ellipse cx="70.2" cy="41.4" rx="7.2" ry="6.7" fill="url(#cdw)"/><ellipse cx="50.7" cy="39.9" rx="7.6" ry="7.1" fill="url(#cdd)"/><ellipse cx="48.8" cy="37.2" rx="1.5" ry="0.9" fill="#fff" opacity=".4"/><ellipse cx="35.1" cy="38.5" rx="7.2" ry="6.7" fill="url(#cdm)"/><ellipse cx="33.3" cy="36.0" rx="1.4" ry="0.9" fill="#fff" opacity=".4"/><ellipse cx="93.0" cy="36.6" rx="7.6" ry="7.1" fill="url(#cdd)"/><ellipse cx="91.1" cy="34.0" rx="1.5" ry="0.9" fill="#fff" opacity=".4"/><ellipse cx="77.3" cy="30.0" rx="7.6" ry="7.1" fill="url(#cdw)"/><ellipse cx="59.8" cy="30.0" rx="7.2" ry="6.7" fill="url(#cdm)"/><ellipse cx="58.0" cy="27.5" rx="1.4" ry="0.9" fill="#fff" opacity=".4"/><ellipse cx="41.8" cy="27.2" rx="7.6" ry="7.1" fill="url(#cdd)"/><ellipse cx="39.9" cy="24.5" rx="1.5" ry="0.9" fill="#fff" opacity=".4"/><ellipse cx="23.7" cy="33.8" rx="6.6" ry="6.2" fill="url(#cdd)"/><ellipse cx="22.1" cy="31.5" rx="1.3" ry="0.8" fill="#fff" opacity=".4"/><ellipse cx="11.4" cy="34.7" rx="6.6" ry="6.2" fill="url(#cdw)"/><ellipse cx="104.4" cy="26.2" rx="7.2" ry="6.7" fill="url(#cdm)"/><ellipse cx="102.6" cy="23.7" rx="1.4" ry="0.9" fill="#fff" opacity=".4"/><ellipse cx="97.8" cy="14.8" rx="6.6" ry="6.2" fill="url(#cdd)"/><ellipse cx="96.1" cy="12.5" rx="1.3" ry="0.8" fill="#fff" opacity=".4"/><ellipse cx="84.5" cy="17.7" rx="6.6" ry="6.2" fill="url(#cdw)"/><ellipse cx="68.9" cy="16.7" rx="7.6" ry="7.1" fill="url(#cdl)"/><ellipse cx="51.3" cy="17.7" rx="7.2" ry="6.7" fill="url(#cdd)"/><ellipse cx="49.5" cy="15.1" rx="1.4" ry="0.9" fill="#fff" opacity=".4"/><ellipse cx="36.6" cy="13.9" rx="7.2" ry="6.7" fill="url(#cdl)"/><ellipse cx="19.6" cy="20.5" rx="8.0" ry="7.4" fill="url(#cdl)"/><ellipse cx="3.8" cy="20.5" rx="6.6" ry="6.2" fill="url(#cdl)"/><ellipse cx="101.6" cy="5.3" rx="6.6" ry="6.2" fill="url(#cdl)"/><ellipse cx="82.6" cy="5.3" rx="8.0" ry="7.4" fill="url(#cdd)"/><ellipse cx="80.6" cy="2.5" rx="1.6" ry="1.0" fill="#fff" opacity=".4"/><ellipse cx="64.6" cy="4.4" rx="7.2" ry="6.7" fill="url(#cdm)"/><ellipse cx="62.7" cy="1.8" rx="1.4" ry="0.9" fill="#fff" opacity=".4"/><ellipse cx="48.4" cy="5.3" rx="7.6" ry="7.1" fill="url(#cdd)"/><ellipse cx="46.5" cy="2.7" rx="1.5" ry="0.9" fill="#fff" opacity=".4"/><ellipse cx="24.7" cy="5.3" rx="7.2" ry="6.7" fill="url(#cdm)"/><ellipse cx="22.9" cy="2.8" rx="1.4" ry="0.9" fill="#fff" opacity=".4"/><ellipse cx="9.5" cy="4.4" rx="7.6" ry="7.1" fill="url(#cdw)"/></g></svg></div></div>
<div class="fav" style="left:133.4px;top:561.1px"><svg viewBox="0 0 16 16" width="6.6" height="6.6"><rect width="16" height="16" rx="3" fill="#3c78e6"/><path d="M5 12.500L10.500 3.500" stroke="#fff" stroke-width="2.200" stroke-linecap="round"/></svg></div><div class="lab" style="left:142.70000000000002px;top:559.7px">Food Ingredients First</div>
<div class="ttl" style="left:133.3px;top:571.8px">Classic Blue: Pantone's color for...</div>
<div class="tile" style="left:271.9px;top:454.3px;width:116.7px;height:102.3px;background:#f8f8f8;"><div class="cell" style="left:8.1px;top:0.1px;width:34.3px;height:34.4px;background:#8ca4f4"><span class="hex">#88AAFF</span></div><div class="cell" style="left:42.1px;top:0.1px;width:34.3px;height:34.4px;background:#2800b4"><span class="hex">#1100BB</span></div><div class="cell" style="left:76.1px;top:0.1px;width:34.3px;height:34.4px;background:#3870a4"><span class="hex">#2277AA</span></div><div class="cell" style="left:8.1px;top:34.2px;width:34.3px;height:34.4px;background:#4c20e0"><span class="hex">#4422EE</span></div><div class="cell" style="left:42.1px;top:34.2px;width:34.3px;height:34.4px;background:#7c84e4"><span class="hex">#7788EE</span></div><div class="cell" style="left:76.1px;top:34.2px;width:34.3px;height:34.4px;background:#3030e4"><span class="hex">#0033EE</span></div><div class="cell" style="left:8.1px;top:68.3px;width:34.3px;height:34.4px;background:#281070"><span class="hex">#221177</span></div><div class="cell" style="left:42.1px;top:68.3px;width:34.3px;height:34.4px;background:#6c64f4"><span class="hex">#6666FF</span></div><div class="cell" style="left:76.1px;top:68.3px;width:34.3px;height:34.4px;background:#6484e4"><span class="hex">#5588EE</span></div></div>
<div class="fav" style="left:272.3px;top:561.1px"><svg viewBox="0 0 16 16" width="6.6" height="6.6"><rect width="16" height="16" rx="3" fill="#f4b400"/><rect width="8" height="8" rx="2" fill="#e53935"/><rect x="8" width="8" height="8" rx="2" fill="#fb8c00"/><rect y="8" width="8" height="8" rx="2" fill="#8e24aa"/><rect x="8" y="8" width="8" height="8" rx="2" fill="#43a047"/><rect x="5" y="5" width="6" height="6" fill="#1e88e5"/></svg></div><div class="lab" style="left:281.6px;top:559.7px">Color Meanings</div>
<div class="ttl" style="left:272.1px;top:571.8px">Blue Color Meaning: The Col...</div>
<div class="tile" style="left:399.9px;top:454.3px;width:169.1px;height:102.3px;background:#f8f8f8;"><div class="im" style="left:7.1px;top:0px;width:154.6px;height:103px;background:linear-gradient(180deg,#3674ee 0%,#3c86f2 35%,#4aa4f4 65%,#86dcf8 100%);"></div></div>
<div class="fav" style="left:400.4px;top:561.1px"><svg viewBox="0 0 16 16" width="6.6" height="6.6"><rect width="16" height="16" rx="3" fill="#2fa58a"/><rect x="4" y="4" width="8" height="8" rx="1" fill="none" stroke="#d8f3ec" stroke-width="1.500"/></svg></div><div class="lab" style="left:409.7px;top:559.7px">Pexels</div>
<div class="ttl" style="left:400px;top:571.8px">Download · Pexels Stock Photos</div>
</div>
<div id="card">
<div class="abs" style="left:9.199999999999932px;top:5.600000000000001px;width:18.6px;height:18.6px;border-radius:50%;background:#f1f3f4"></div>
<div class="abs" style="left:14.199999999999932px;top:10.600000000000009px"><svg viewBox="0 0 16 16" width="8.6" height="8.6" style="display:block"><circle cx="8" cy="8" r="7.500" fill="#e9502e"/><path d="M12.300 1.850A7.500 7.500 0 0 1 15.500 8L8 8Z" fill="#a8283e"/><path d="M15.500 8A7.500 7.500 0 0 1 7 15.430L8 8Z" fill="#55205e"/><circle cx="7.600" cy="8.200" r="3" fill="#fff"/></svg></div>
<div class="ptitle" style="left:35.09999999999991px;top:9.799999999999997px">HTML Color Codes</div>
<svg viewBox="0 0 24 24" width="12" height="12" style="position:absolute;left:326.4px;top:8.900000000000006px"><path d="M15 5l-7 7 7 7" fill="none" stroke="#5f6368" stroke-width="2.300"/></svg>
<svg viewBox="0 0 24 24" width="12" height="12" style="position:absolute;left:354.29999999999995px;top:8.900000000000006px"><path d="M9 5l7 7-7 7" fill="none" stroke="#5f6368" stroke-width="2.300"/></svg>
<div class="abs" style="left:375.79999999999995px;top:3.5px;width:22.6px;height:22.6px;border-radius:50%;background:#f1f3f4"></div>
<svg viewBox="0 0 24 24" width="12.4" height="12.4" style="position:absolute;left:380.8999999999999px;top:8.8px"><circle cx="12" cy="5" r="2.200" fill="#202124"/><circle cx="12" cy="12" r="2.200" fill="#202124"/><circle cx="12" cy="19" r="2.200" fill="#202124"/></svg>
<svg viewBox="0 0 24 24" width="13" height="13" style="position:absolute;left:407.79999999999995px;top:8.600000000000009px"><path d="M5 5l14 14M19 5l-14 14" fill="none" stroke="#5f6368" stroke-width="2"/></svg>
<div id="bigimg"></div>
<div class="abs" style="left:9.200000000000045px;top:245.2px;width:20.6px;height:20.6px;border-radius:50%;background:#3b4d5b"></div>
<svg viewBox="0 0 24 24" width="11.5" height="11.5" style="position:absolute;left:13.75px;top:249.75px"><path d="M3.500 8V5.500a2 2 0 0 1 2-2H8M16 3.500h2.500a2 2 0 0 1 2 2V8M3.500 16v2.500a2 2 0 0 0 2 2H8" fill="none" stroke="#fff" stroke-width="2.200" stroke-linecap="round"/><circle cx="12" cy="12" r="4" fill="#fff"/><circle cx="18.700" cy="18.700" r="1.800" fill="#fff"/></svg>
<div class="abs" style="left:9.299999999999955px;top:288.2px;font-size:10px;line-height:12px;color:#202124;white-space:nowrap">Baby Blue Color, Codes and Facts – HTML Color Codes</div>
<div class="abs" style="left:9.299999999999955px;top:308.3px;font-size:6.75px;line-height:10px;color:#70757a;white-space:nowrap;letter-spacing:-.02px">Images may be subject to copyright. <b style="color:#202124">Learn More</b></div>
<div class="abs" style="left:380.5px;top:284.2px;width:45.3px;height:20px;border-radius:10px;background:#e8f0fe;color:#3c4bc4;font-size:8px;line-height:20px;text-align:center;-webkit-text-stroke:.2px #3c4bc4">Visit</div>
<div class="abs" style="left:0;top:327.4px;width:435px;height:1px;background:#ebebeb"></div>
<div class="abs" style="left:9.299999999999955px;top:334.8px;font-size:10.5px;line-height:12px;color:#202124;white-space:nowrap">Related content</div>

<div class="rt" style="left:9.299999999999955px;top:354.5px;width:135.7px;height:76px;background:#4c63d9"></div>
<div class="fav" style="left:9.899999999999977px;top:435.7px"><svg viewBox="0 0 16 16" width="6" height="6" style="display:block"><circle cx="8" cy="8" r="7.500" fill="#e9502e"/><path d="M12.300 1.850A7.500 7.500 0 0 1 15.500 8L8 8Z" fill="#a8283e"/><path d="M15.500 8A7.500 7.500 0 0 1 7 15.430L8 8Z" fill="#55205e"/><circle cx="7.600" cy="8.200" r="3" fill="#fff"/></svg></div>
<div class="lab" style="left:18.5px;top:433.7px">HTML Color Codes</div>
<div class="ttl" style="left:9.299999999999955px;top:445.2px">Royal Blue Color, Codes and Fact…</div>

<div class="rt" style="left:149.79999999999995px;top:354.5px;width:135.7px;height:84.6px;background:#45a0e6"></div>
<div class="fav" style="left:150.0999999999999px;top:444.5px"><svg viewBox="0 0 16 16" width="6.600" height="6.600" style="display:block"><rect width="16" height="16" rx="3" fill="#111"/><text x="8" y="10.500" font-family="Liberation Sans,sans-serif" font-size="6" font-weight="700" text-anchor="middle" fill="#fff">T+L</text></svg></div>
<div class="lab" style="left:159.0999999999999px;top:442.2px">Travel + Leisure</div>
<div class="ttl" style="left:149.79999999999995px;top:453.59999999999997px">Why you are more likely to click o…</div>

<div class="rt" style="left:290.79999999999995px;top:354.5px;width:135.2px;height:109.8px;background:#a0b4d0"></div>
<div class="fav" style="left:291.19999999999993px;top:470.2px"><svg viewBox="0 0 16 16" width="6.600" height="6.600" style="display:block"><rect width="16" height="16" rx="3" fill="#4a4a4a"/><path d="M4.500 12.500V6l3.500-2.500L11.500 6v6.500z" fill="none" stroke="#fff" stroke-width="1.600"/></svg></div>
<div class="lab" style="left:300.0999999999999px;top:467.90000000000003px">Laminex</div>
<div class="ttl" style="left:290.79999999999995px;top:478.8px">Just Blue - Natural - Edging - AB…</div>

<div class="rt" style="left:9.299999999999955px;top:464.2px;width:135.8px;height:80px;background:#c8f4f7;border:1px solid #dcdcdc"></div>
<div class="rt" style="left:149.79999999999995px;top:468.2px;width:135.7px;height:80px;background:#f8f8f8"></div>
<div class="abs" style="left:153.5999999999999px;top:472.2px;width:128px;height:80px;background:#67bab6"></div>
<div class="rt" style="left:290.79999999999995px;top:497.99999999999994px;width:135.2px;height:60px;background:#a9cfe0"></div>
</div>
<div id="sb"><div id="sbthumb"></div>
<svg viewBox="0 0 9 9" width="9" height="9" style="position:absolute;left:.4px;top:1.400px"><path d="M2.500 5.800l2-2.400 2 2.400z" fill="#505050"/></svg>
<svg viewBox="0 0 9 9" width="9" height="9" style="position:absolute;left:.4px;top:510.400px"><path d="M2.500 3.400l2 2.400 2-2.400z" fill="#505050"/></svg>
</div>
<div id="menu">
<svg viewBox="0 0 24 24" width="11.6" height="11.6" style="position:absolute;left:8.9px;top:13.599999999999998px"><path d="M18 16.080c-.76 0-1.440.3-1.960.77L8.910 12.700c.05-.23.09-.46.09-.7s-.04-.47-.09-.7l7.050-4.110c.54.5 1.250.81 2.040.81 1.660 0 3-1.340 3-3s-1.340-3-3-3-3 1.340-3 3c0 .24.040.47.090.7L8.040 9.810C7.500 9.310 6.790 9 6 9c-1.660 0-3 1.340-3 3s1.340 3 3 3c.79 0 1.500-.31 2.040-.81l7.120 4.160c-.5.210-.8.430-.8.650 0 1.610 1.310 2.920 2.920 2.920 1.610 0 2.920-1.310 2.920-2.920s-1.310-2.920-2.920-2.920z" fill="#202124"/></svg>
<div class="mi" style="top:14.4px">Share</div>
<svg viewBox="0 0 24 24" width="11.6" height="11.6" style="position:absolute;left:8.9px;top:43.400000000000006px"><path d="M17 3H7c-1.100 0-2 .9-2 2v16l7-3 7 3V5c0-1.100-.9-2-2-2zm0 15l-5-2.180L7 18V5h10v13z" fill="#202124"/></svg>
<div class="mi" style="top:44.2px">Save</div>
<svg viewBox="0 0 24 24" width="11.6" height="11.6" style="position:absolute;left:8.9px;top:73.2px"><path d="M14.400 6L14 4H5v17h2v-7h5.600l.4 2h7V6h-5.600zm3.600 8h-3.360l-.4-2H7V6h5.360l.4 2H18v6z" fill="#202124"/></svg>
<div class="mi" style="top:74px">Report this result</div>
</div>
<div id="hdr"><div id="sbox"></div><div id="q">blue</div><svg viewBox="0 0 24 24" width="12.4" height="12.4" style="position:absolute;left:338px;top:9.5px"><path d="M12 15c1.660 0 3-1.340 3-3V6c0-1.660-1.340-3-3-3S9 4.340 9 6v6c0 1.660 1.340 3 3 3z" fill="#4285f4"/><path d="M11 18.920h2V22h-2z" fill="#34a853"/><path d="M7 12H5c0 1.930.78 3.680 2.050 4.950l1.410-1.410C7.560 14.630 7 13.380 7 12z" fill="#fbbc04"/><path d="M12 17c-1.380 0-2.630-.56-3.540-1.470l-1.410 1.410A6.990 6.990 0 0 0 12.010 19c3.870 0 6.980-3.140 6.980-7h-2c0 2.760-2.230 5-4.990 5z" fill="#ea4335"/></svg><svg viewBox="0 0 24 24" width="15.3" height="15.3" style="position:absolute;left:362.55px;top:7.15px"><path d="M16.500 7H18.500a2.500 2.500 0 0 1 2.500 2.500" fill="none" stroke="#34a853" stroke-width="2.700"/><path d="M3 12.500V9.500A2.500 2.500 0 0 1 5.500 7H8l1.500-2.500h5L16.500 7.300" fill="none" stroke="#4285f4" stroke-width="2.700" stroke-linejoin="round"/><path d="M3 12v4.500A2.500 2.500 0 0 0 5.500 19H11" fill="none" stroke="#fbbc04" stroke-width="2.700"/><path d="M10.500 19H18.500a2.500 2.500 0 0 0 2.500-2.500V9.300" fill="none" stroke="#ea4335" stroke-width="2.700"/><circle cx="12" cy="12.800" r="3" fill="#4285f4"/></svg><svg viewBox="0 0 24 24" width="11.6" height="11.6" style="position:absolute;left:386.6px;top:9.4px"><path d="M15.500 14h-.79l-.28-.27A6.471 6.471 0 0 0 16 9.500 6.500 6.500 0 1 0 9.500 16c1.610 0 3.090-.59 4.230-1.570l.27.280v.790l5 4.990L20.490 19l-4.990-5zm-6 0C7.010 14 5 11.990 5 9.500S7.010 5 9.500 5 14 7.010 14 9.500 11.990 14 9.500 14z" fill="#4285f4"/></svg><svg viewBox="0 0 24 24" width="13" height="13" style="position:absolute;left:956.2px;top:7.8px"><path d="M13.850 22.250h-3.700c-.74 0-1.360-.54-1.450-1.270l-.27-1.890c-.27-.14-.53-.29-.79-.46l-1.800.72c-.7.260-1.470-.03-1.810-.65L2.200 15.530c-.35-.66-.2-1.440.36-1.880l1.530-1.190c-.01-.15-.02-.3-.02-.46 0-.15.010-.31.020-.46l-1.520-1.190c-.59-.45-.74-1.260-.37-1.880l1.850-3.190c.34-.62 1.110-.9 1.790-.63l1.810.73c.26-.17.520-.32.780-.46l.27-1.910c.09-.7.710-1.250 1.440-1.250h3.700c.74 0 1.360.54 1.450 1.270l.27 1.890c.27.140.53.290.79.460l1.800-.72c.71-.26 1.480.03 1.820.65l1.840 3.180c.36.660.2 1.440-.36 1.880l-1.520 1.190c.01.150.02.300.02.460s-.1.310-.2.460l1.520 1.190c.56.450.72 1.230.37 1.860l-1.860 3.220c-.34.620-1.110.9-1.800.63l-1.800-.72c-.26.170-.52.320-.78.460l-.27 1.910c-.1.680-.72 1.220-1.460 1.220zm-3.230-2h2.760l.37-2.550.53-.22c.44-.18.880-.44 1.340-.78l.45-.34 2.380.96 1.380-2.400-2.030-1.580.07-.56c.03-.26.060-.51.060-.78s-.03-.53-.06-.78l-.07-.56 2.030-1.580-1.390-2.400-2.390.96-.45-.35c-.42-.32-.87-.58-1.330-.77l-.52-.22-.37-2.550h-2.760l-.37 2.550-.53.21c-.44.190-.88.440-1.340.79l-.45.330-2.380-.95-1.390 2.390 2.030 1.580-.07.56a7 7 0 0 0-.6.790c0 .26.020.53.060.78l.7.56-2.030 1.580 1.380 2.400 2.390-.96.450.35c.43.330.86.580 1.330.77l.53.22.38 2.550z" fill="#3c4043"/><circle cx="12" cy="12" r="3.500" fill="#3c4043"/></svg><svg viewBox="0 0 24 24" width="12.4" height="12.4" style="position:absolute;left:984.8px;top:8.3px"><circle cx="5" cy="5" r="2" fill="#3c4043"/><circle cx="5" cy="12" r="2" fill="#3c4043"/><circle cx="5" cy="19" r="2" fill="#3c4043"/><circle cx="12" cy="5" r="2" fill="#3c4043"/><circle cx="12" cy="12" r="2" fill="#3c4043"/><circle cx="12" cy="19" r="2" fill="#3c4043"/><circle cx="19" cy="5" r="2" fill="#3c4043"/><circle cx="19" cy="12" r="2" fill="#3c4043"/><circle cx="19" cy="19" r="2" fill="#3c4043"/></svg>
<div class="abs" style="left:1008.6px;top:5.2px;width:18.8px;height:18.8px;border-radius:50%;background:#5b2fb6;color:#fff;font-size:9.4px;line-height:18.8px;text-align:center">J</div></div>
<div id="chrome"><div id="omni"></div><div id="chromeline"></div><div id="url"><b>google.com</b>/search?q=blue&amp;tbm=isch&amp;ved=2ahUKEwjZkaXo9M78AhWYX6QEHRmpBPsQ2-cCegQIABAA&amp;oq=blue&amp;gs_lcp=CgNpbWcQAzIECAAQQzIECAAQQzIECAAQQzIECAAQQzIECAAQQzIECAAQQzIECAAQQzIECAAQQzIECAAQQzIECAAQQ1DwCFiqDGC2D...</div>
<svg viewBox="0 0 24 24" width="9.4" height="9.4" style="position:absolute;left:930.8px;top:2.4px"><path d="M14 5l5 5-5 5v-3c-4 0-6.500 1-8.500 4 .8-4.500 3.500-8 8.500-8.500z" fill="none" stroke="#5f6368" stroke-width="1.700" stroke-linejoin="round"/><path d="M4 9v11h15v-4" fill="none" stroke="#5f6368" stroke-width="1.700"/></svg>
<svg viewBox="0 0 24 24" width="9.6" height="9.6" style="position:absolute;left:948.7px;top:2.2px"><path d="M12 3.500l2.600 5.600 6.100.7-4.500 4.200 1.200 6-5.400-3-5.400 3 1.200-6L3.300 9.800l6.100-.7z" fill="none" stroke="#3c4043" stroke-width="1.800" stroke-linejoin="round"/></svg>
<svg viewBox="0 0 24 24" width="10" height="10" style="position:absolute;left:971.3px;top:2px"><path d="M20.500 11H19V7a2 2 0 0 0-2-2h-4V3.500a2.500 2.500 0 0 0-5 0V5H4a2 2 0 0 0-2 2v3.800h1.500a2.700 2.700 0 0 1 0 5.400H2V20a2 2 0 0 0 2 2h3.800v-1.500a2.700 2.700 0 0 1 5.400 0V22H17a2 2 0 0 0 2-2v-4h1.500a2.500 2.500 0 0 0 0-5z" fill="#202124"/></svg>
<svg viewBox="0 0 24 24" width="10" height="10" style="position:absolute;left:989.4px;top:2px"><rect x="3.500" y="4.500" width="17" height="15" rx="1.500" fill="none" stroke="#202124" stroke-width="2.400"/><rect x="12" y="4.500" width="8.500" height="15" fill="#202124"/></svg>
<div class="abs" style="left:1006.2px;top:.7px;width:12.6px;height:12.6px;border-radius:50%;background:#5b2fb6;color:#fff;font-size:6.6px;line-height:12.6px;text-align:center">J</div>
</div>
</div></body></html>
